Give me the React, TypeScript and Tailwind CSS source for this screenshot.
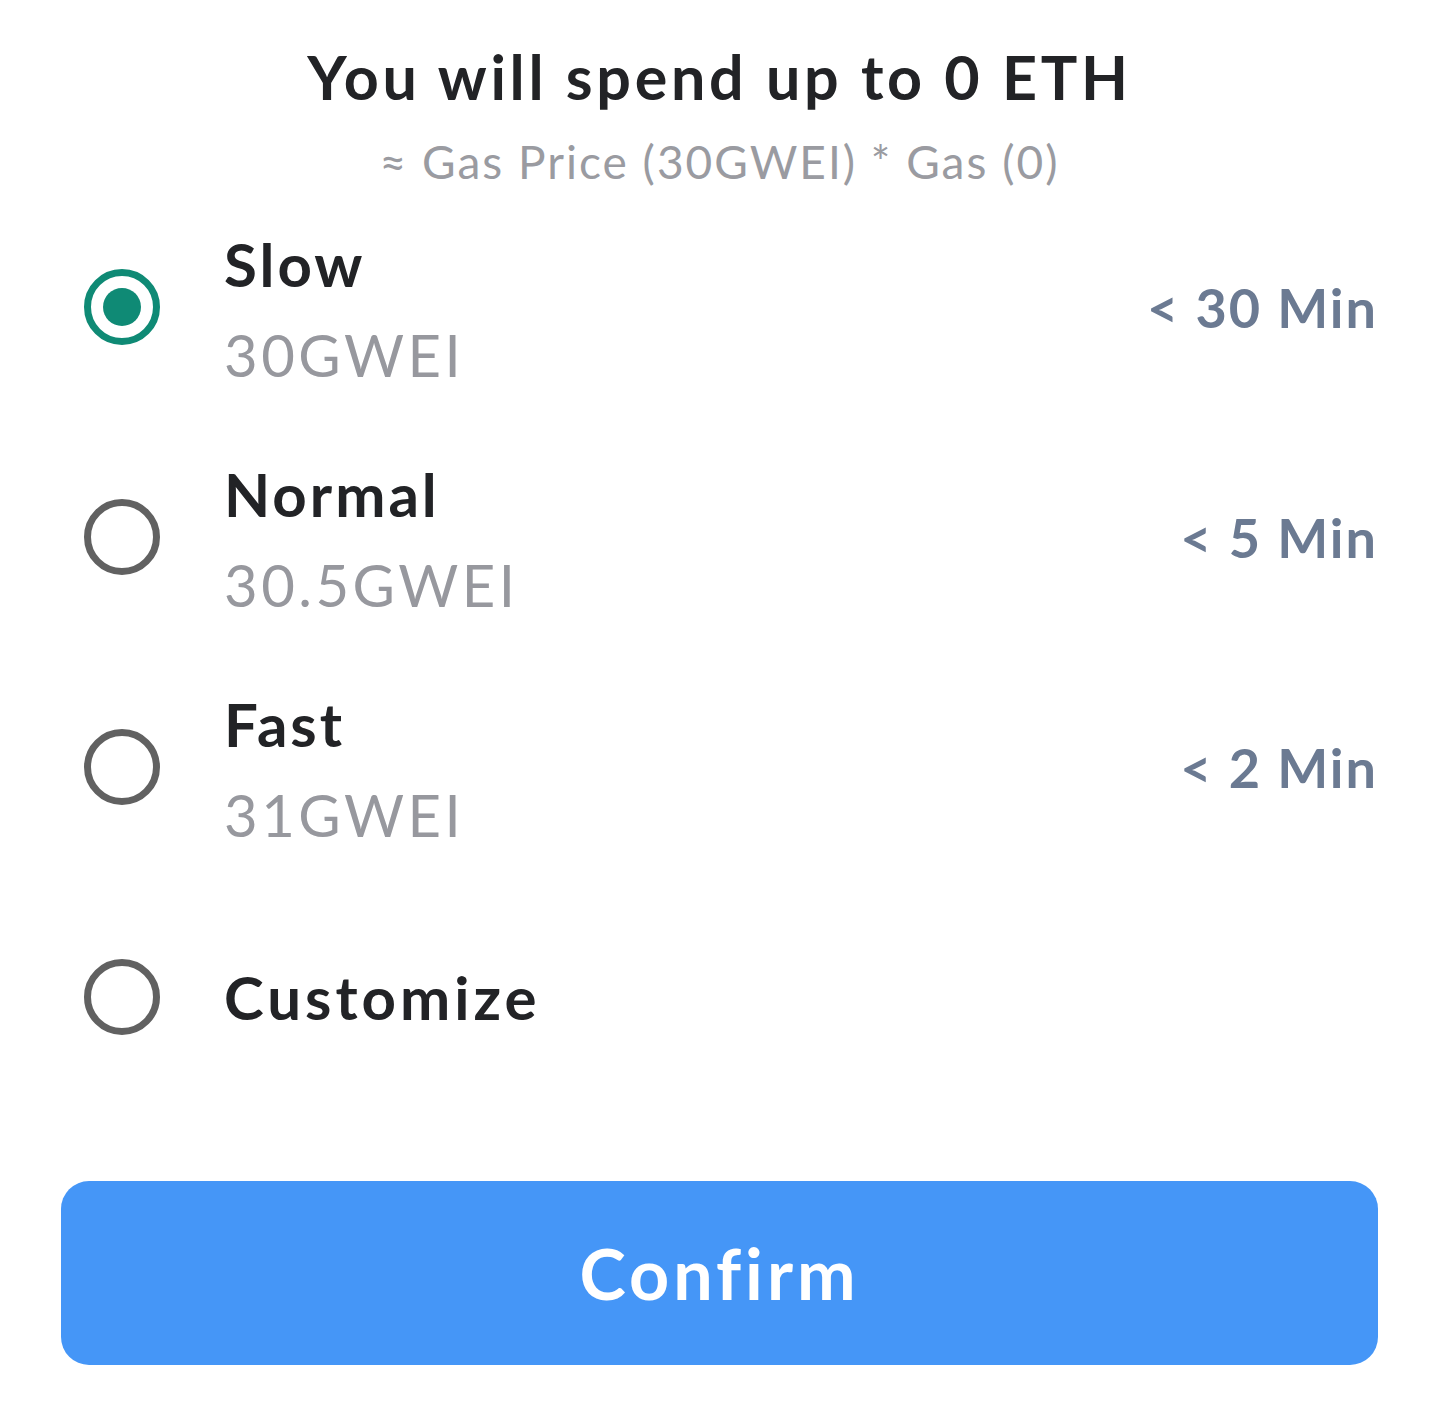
import React, { useState } from "react";

const options = [
  { id: "slow", label: "Slow", price: "30GWEI", time: "< 30 Min" },
  { id: "normal", label: "Normal", price: "30.5GWEI", time: "< 5 Min" },
  { id: "fast", label: "Fast", price: "31GWEI", time: "< 2 Min" },
];

function Radio({ checked }: { checked: boolean }) {
  return (
    <div
      className={`ml-[23px] flex h-[76px] w-[76px] shrink-0 items-center justify-center rounded-full border-[7px] ${
        checked ? "border-[#0f8a75]" : "border-[#616161]"
      }`}
    >
      {checked && <div className="h-[38px] w-[38px] rounded-full bg-[#0f8a75]" />}
    </div>
  );
}

export default function App() {
  const [selected, setSelected] = useState("slow");

  return (
    <div className="min-h-[1403px] bg-white px-[61px] font-['Lato','Liberation_Sans',sans-serif]">
      <div className="pt-[37px] text-center">
        <h1 className="text-[61px] font-bold leading-[80px] tracking-[3.7px] text-[#222326]">
          You will spend up to 0 ETH
        </h1>
        <p className="mt-[17px] text-[46px] leading-[56px] tracking-[2px] text-[#9a9ba1]">
          ≈ Gas Price (30GWEI) * Gas (0)
        </p>
      </div>

      <div className="mt-[2px]">
        {options.map((o) => (
          <button
            key={o.id}
            onClick={() => setSelected(o.id)}
            className="flex h-[230px] w-full items-center text-left"
          >
            <Radio checked={selected === o.id} />
            <div className="ml-[64px] flex-1 pt-[6px]">
              <div className="text-[60px] font-bold leading-[90px] tracking-[3px] text-[#222326]">{o.label}</div>
              <div className="text-[58px] leading-[92px] tracking-[3.5px] text-[#97989e]">{o.price}</div>
            </div>
            <div className="text-[54px] font-bold tracking-[2px] text-[#6b7a92]">{o.time}</div>
          </button>
        ))}
        <button
          onClick={() => setSelected("custom")}
          className="flex h-[230px] w-full items-center text-left"
        >
          <Radio checked={selected === "custom"} />
          <div className="ml-[64px] text-[60px] font-bold tracking-[4px] text-[#222326]">Customize</div>
        </button>
      </div>

      <button className="mt-[69px] flex h-[184px] w-full items-center justify-center rounded-[28px] bg-[#4596f7] text-[70px] font-bold tracking-[4px] text-white">
        Confirm
      </button>
    </div>
  );
}
